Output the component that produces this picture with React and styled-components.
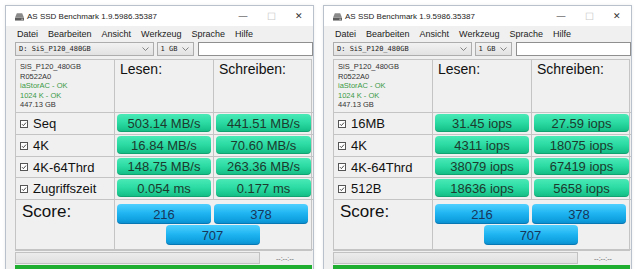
import React from 'react';
import styled, { createGlobalStyle } from 'styled-components';

const GlobalStyle = createGlobalStyle`
  html, body {
    margin: 0;
    background: #fff;
  }
  * {
    box-sizing: border-box;
  }
`;

const windows = [
  {
    rows: [
      { name: 'Seq', read: '503.14 MB/s', write: '441.51 MB/s' },
      { name: '4K', read: '16.84 MB/s', write: '70.60 MB/s' },
      { name: '4K-64Thrd', read: '148.75 MB/s', write: '263.36 MB/s' },
      { name: 'Zugriffszeit', read: '0.054 ms', write: '0.177 ms' },
    ],
    score: { read: '216', write: '378', total: '707' },
  },
  {
    rows: [
      { name: '16MB', read: '31.45 iops', write: '27.59 iops' },
      { name: '4K', read: '4311 iops', write: '18075 iops' },
      { name: '4K-64Thrd', read: '38079 iops', write: '67419 iops' },
      { name: '512B', read: '18636 iops', write: '5658 iops' },
    ],
    score: { read: '216', write: '378', total: '707' },
  },
];

const menu = ['Datei', 'Bearbeiten', 'Ansicht', 'Werkzeug', 'Sprache', 'Hilfe'];

const DriveIcon = () => (
  <svg width="9" height="9" viewBox="0 0 10 9">
    <path d="M2 1h6l2 5H0z" fill="#8a8a8a" />
    <rect x="0" y="6" width="10" height="3" fill="#5c5c5c" />
    <rect x="7" y="7" width="2" height="1" fill="#cfcfcf" />
  </svg>
);

const CheckIcon = () => (
  <svg width="8" height="8" viewBox="0 0 8 8">
    <rect x="0.5" y="0.5" width="7" height="7" fill="#fff" stroke="#555" />
    <path d="M2 4.2l1.4 1.4L6 2.6" fill="none" stroke="#333" strokeWidth="0.9" />
  </svg>
);

const Chevron = () => (
  <svg width="7" height="4" viewBox="0 0 7 4">
    <path d="M0.5 0.5l3 3 3-3" fill="none" stroke="#777" strokeWidth="0.9" />
  </svg>
);

const BenchWindow = ({ data }) => (
  <Frame>
    <TitleBar>
      <DriveIcon />
      <span className="title">AS SSD Benchmark 1.9.5986.35387</span>
      <Controls>
        <span>&#8212;</span>
        <span className="max">&#9744;</span>
        <span>&#10005;</span>
      </Controls>
    </TitleBar>
    <MenuBar>
      {menu.map((m) => (
        <li key={m}>{m}</li>
      ))}
    </MenuBar>
    <Toolbar>
      <Select $w={139}>
        <span>D: SiS_P120_480GB</span>
        <Chevron />
      </Select>
      <Select $w={38}>
        <span>1 GB</span>
        <Chevron />
      </Select>
      <TextBox />
    </Toolbar>
    <Results>
      <InfoCell>
        <div>SiS_P120_480GB</div>
        <div>R0522A0</div>
        <div className="ok">iaStorAC - OK</div>
        <div className="ok">1024 K - OK</div>
        <div>447.13 GB</div>
      </InfoCell>
      <HeadCell>Lesen:</HeadCell>
      <HeadCell>Schreiben:</HeadCell>
      {data.rows.map((r) => (
        <React.Fragment key={r.name}>
          <LabelCell>
            <CheckIcon />
            <span>{r.name}</span>
          </LabelCell>
          <ValueCell>
            <Value>{r.read}</Value>
          </ValueCell>
          <ValueCell>
            <Value>{r.write}</Value>
          </ValueCell>
        </React.Fragment>
      ))}
      <ScoreLabel>Score:</ScoreLabel>
      <ScoreCell>
        <ScoreBox>{data.score.read}</ScoreBox>
        <ScoreBox>{data.score.write}</ScoreBox>
        <ScoreBox className="total">{data.score.total}</ScoreBox>
      </ScoreCell>
    </Results>
    <StatusRow>
      <Progress />
      <span>--:--:--</span>
    </StatusRow>
    <GreenBar />
  </Frame>
);

const App = () => (
  <>
    <GlobalStyle />
    <Page>
      {windows.map((w, i) => (
        <BenchWindow key={i} data={w} />
      ))}
    </Page>
  </>
);

export default App;

const Page = styled.div`
  display: flex;
  gap: 9px;
  padding: 5px 0 0 5px;
  height: 269px;
  overflow: hidden;
`;

const Frame = styled.div`
  width: 309px;
  height: 270px;
  flex: none;
  display: flex;
  flex-direction: column;
  background: #f0f0f0;
  border: 1px solid #b9c2cc;
  border-bottom: none;
  box-shadow: 0 0 3px rgba(0, 0, 0, 0.08);
`;

const TitleBar = styled.div`
  height: 20px;
  flex: none;
  display: flex;
  align-items: center;
  padding-left: 9px;
  background: #fff;
  font-family: 'Liberation Sans', Arial, sans-serif;
  font-size: 8px;
  color: #222;
  .title {
    margin-left: 3px;
  }
`;

const Controls = styled.div`
  margin-left: auto;
  display: flex;
  span {
    width: 28px;
    text-align: center;
    font-size: 9px;
    color: #333;
  }
  .max {
    color: #c8c8c8;
    font-size: 10px;
  }
`;

const MenuBar = styled.ul`
  list-style: none;
  margin: 0;
  height: 15px;
  padding: 0 0 0 11px;
  display: flex;
  align-items: center;
  gap: 10px;
  font-family: 'Liberation Sans', Arial, sans-serif;
  font-size: 9px;
  color: #222;
  background: #f0f0f0;
`;

const Toolbar = styled.div`
  display: flex;
  align-items: center;
  gap: 3px;
  height: 14px;
  margin-top: 1px;
  padding-left: 9px;
`;

const Select = styled.div`
  width: ${(p) => p.$w}px;
  height: 14px;
  display: flex;
  align-items: center;
  justify-content: space-between;
  padding: 0 4px 0 3px;
  border: 1px solid #adadad;
  background: linear-gradient(#f2f2f2, #e2e2e2);
  font-family: 'DejaVu Sans Mono', 'Liberation Mono', monospace;
  font-size: 7px;
  color: #222;
`;

const TextBox = styled.div`
  width: 115px;
  height: 14px;
  margin-left: 1px;
  border: 1px solid #8f8f8f;
  background: #fff;
`;

const Results = styled.div`
  margin: 3px 0 0 9px;
  width: 297px;
  display: grid;
  grid-template-columns: 99px 99px 99px;
  grid-template-rows: 53px 22px 22px 21px 22px 50px;
  border: 1px solid #c4c4c4;
  background: #f0f0f0;
  font-family: 'Liberation Sans', Arial, sans-serif;
`;

const Cell = styled.div`
  border-right: 1px solid #c4c4c4;
  border-bottom: 1px solid #c4c4c4;
  &:nth-child(3n) {
    border-right: none;
  }
`;

const InfoCell = styled(Cell)`
  padding: 2px 0 0 4px;
  font-family: 'Liberation Sans', Arial, sans-serif;
  font-size: 7.5px;
  line-height: 9.5px;
  color: #333;
  .ok {
    color: #3a9a46;
  }
`;

const HeadCell = styled(Cell)`
  padding: 1px 0 0 5px;
  font-size: 14px;
  color: #111;
`;

const LabelCell = styled(Cell)`
  display: flex;
  align-items: center;
  gap: 5px;
  padding-left: 4px;
  font-size: 13px;
  color: #111;
  svg {
    flex: none;
  }
`;

const ValueCell = styled(Cell)`
  padding: 1px 2px 2px;
`;

const Value = styled.div`
  height: 100%;
  display: flex;
  align-items: center;
  justify-content: center;
  border-radius: 4px;
  background: linear-gradient(#4ae9b6 0%, #2ddca4 45%, #1bc990 80%, #15b982 100%);
  box-shadow: inset 0 -1px 0 rgba(0, 90, 60, 0.25);
  font-size: 13px;
  color: #1c3a2e;
`;

const ScoreLabel = styled(Cell)`
  padding: 2px 0 0 6px;
  font-size: 17px;
  color: #111;
`;

const ScoreCell = styled.div`
  grid-column: span 2;
  border-bottom: 1px solid #c4c4c4;
  display: grid;
  grid-template-columns: 94px 94px;
  grid-template-rows: 20px 20px;
  column-gap: 3px;
  row-gap: 1px;
  padding: 4px 0 0 2px;
  .total {
    grid-column: 1 / span 2;
    justify-self: center;
    width: 94px;
  }
`;

const ScoreBox = styled.div`
  display: flex;
  align-items: center;
  justify-content: center;
  border-radius: 4px;
  background: linear-gradient(#4fd0ff 0%, #20b6f2 45%, #0fa0e0 80%, #0a8ccc 100%);
  box-shadow: inset 0 -1px 0 rgba(0, 50, 100, 0.25);
  font-size: 13px;
  color: #17365a;
`;

const StatusRow = styled.div`
  display: flex;
  align-items: center;
  height: 12px;
  margin: 1px 0 0 9px;
  span {
    margin-left: 16px;
    font-family: 'Liberation Sans', Arial, sans-serif;
    font-size: 7px;
    color: #666;
  }
`;

const Progress = styled.div`
  width: 245px;
  height: 12px;
  border: 1px solid #c2c2c2;
  background: linear-gradient(#ececec, #e0e0e0);
`;

const GreenBar = styled.div`
  margin: 1px 0 0 9px;
  width: 297px;
  flex: 1;
  background: #1fae30;
`;
